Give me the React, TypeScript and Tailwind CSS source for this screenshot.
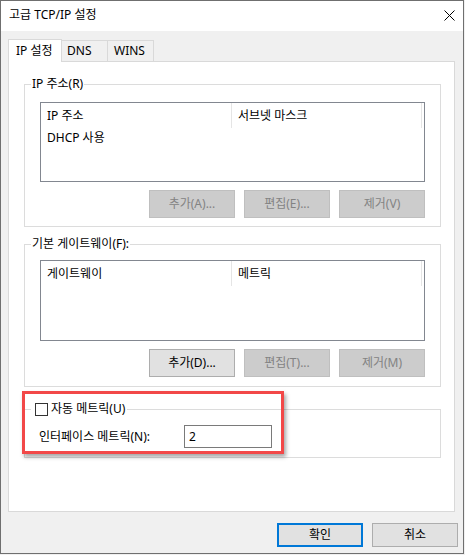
import React from "react";

const FONT = { fontFamily: '"Noto Sans", "Noto Sans CJK KR", sans-serif' };

function Btn({ label, disabled }: { label: string; disabled?: boolean }) {
  return (
    <div
      className={
        "w-[86px] h-[28px] flex items-center justify-center border text-[12px] " +
        (disabled
          ? "bg-[#cccccc] border-[#bfbfbf] text-[#838383]"
          : "bg-[#e1e1e1] border-[#adadad] text-black")
      }
    >
      {label}
    </div>
  );
}

function ListBox({ c1, c2, rows, h }: { c1: string; c2: string; rows: string[]; h: string }) {
  return (
    <div className={"w-[385px] border border-[#828790] bg-white flex flex-col " + h}>
      <div className="flex h-[25px]">
        <div className="w-[191px] border-r border-[#e5e5e5] pl-[6px] flex items-center">{c1}</div>
        <div className="w-[190px] border-r border-[#e5e5e5] pl-[6px] flex items-center">{c2}</div>
      </div>
      {rows.map((r) => (
        <div key={r} className="h-[20px] pl-[6px] flex items-center">
          {r}
        </div>
      ))}
    </div>
  );
}

export default function App() {
  return (
    <div className="w-[465px] h-[555px] bg-[#f0f0f0] text-[12px] text-black leading-[16px]" style={FONT}>
      <div className="relative w-[464px] h-[554px] border border-[#6f6f6f] flex flex-col bg-[#f0f0f0]">
        {/* title bar */}
        <div className="h-[30px] bg-white flex items-center justify-between pl-[8px] pr-[8px] shrink-0">
          <span className="text-[12px] -mt-[2px]">고급 TCP/IP 설정</span>
          <svg width="11" height="11" viewBox="0 0 11 11" className="-mt-[1px]">
            <path d="M0.5 0.5 L10.5 10.5 M10.5 0.5 L0.5 10.5" stroke="#000" strokeWidth="1" fill="none" />
          </svg>
        </div>
        {/* body */}
        <div className="flex flex-col pl-[7px] pt-[8px]">
          {/* tabs */}
          <div className="flex items-end h-[22px]">
            <div className="relative z-10 w-[54px] h-[23px] -mb-px bg-white border border-b-0 border-[#d9d9d9] pl-[7px] flex items-center">
              IP 설정
            </div>
            <div className="-ml-px w-[47px] h-[21px] border border-b-0 border-[#d9d9d9] pl-[5px] flex items-center">
              DNS
            </div>
            <div className="-ml-px w-[47px] h-[21px] border border-b-0 border-[#d9d9d9] pl-[6px] flex items-center">
              WINS
            </div>
          </div>
          {/* panel */}
          <div className="w-[447px] h-[451px] border border-[#d9d9d9] bg-white pl-[15px] pt-[14px] flex flex-col">
            <fieldset className="w-[417px] h-[151px] border border-[#dcdcdc] px-[15px] pt-[10px] flex flex-col">
              <legend className="-ml-[9px] px-[1px] h-[16px]">IP 주소(R)</legend>
              <ListBox c1="IP 주소" c2="서브넷 마스크" rows={["DHCP 사용"]} h="h-[80px]" />
              <div className="mt-[8px] flex justify-end gap-[9px]">
                <Btn label="추가(A)..." disabled />
                <Btn label="편집(E)..." disabled />
                <Btn label="제거(V)" disabled />
              </div>
            </fieldset>
            <fieldset className="mt-[9px] w-[417px] h-[151px] border border-[#dcdcdc] px-[15px] pt-[8px] flex flex-col">
              <legend className="-ml-[9px] px-[1px] h-[16px]">기본 게이트웨이(F):</legend>
              <ListBox c1="게이트웨이" c2="메트릭" rows={[]} h="h-[81px]" />
              <div className="mt-[8px] flex justify-end gap-[9px]">
                <Btn label="추가(D)..." />
                <Btn label="편집(T)..." disabled />
                <Btn label="제거(M)" disabled />
              </div>
            </fieldset>
            <fieldset className="mt-[14px] w-[417px] h-[57px] border border-[#dcdcdc] pl-[14px] pt-[8px] flex flex-col">
              <legend className="-ml-[8px] pl-[4px] pr-[2px] h-[16px] flex items-center">
                <span className="w-[13px] h-[13px] border border-[#333333] bg-white inline-block mr-[3px]" />
                <span>자동 메트릭(U)</span>
              </legend>
              <div className="flex items-center">
                <span className="w-[145px]">인터페이스 메트릭(N):</span>
                <div className="w-[88px] h-[23px] border border-[#7a7a7a] bg-white pl-[4px] flex items-center">2</div>
              </div>
            </fieldset>
          </div>
          {/* bottom buttons */}
          <div className="mt-[11px] flex justify-end gap-[9px] pr-[5px]">
            <div className="w-[86px] h-[24px] border-2 border-[#0078d7] bg-[#e1e1e1] flex items-center justify-center">확인</div>
            <div className="w-[86px] h-[24px] border border-[#adadad] bg-[#e1e1e1] flex items-center justify-center">취소</div>
          </div>
        </div>
        {/* annotation highlight */}
        <div className="absolute left-[21px] top-[390px] w-[262px] h-[63px] border-[3px] border-[#f24848] shadow-[2px_3px_4px_rgba(0,0,0,0.35)] pointer-events-none" />
      </div>
    </div>
  );
}
